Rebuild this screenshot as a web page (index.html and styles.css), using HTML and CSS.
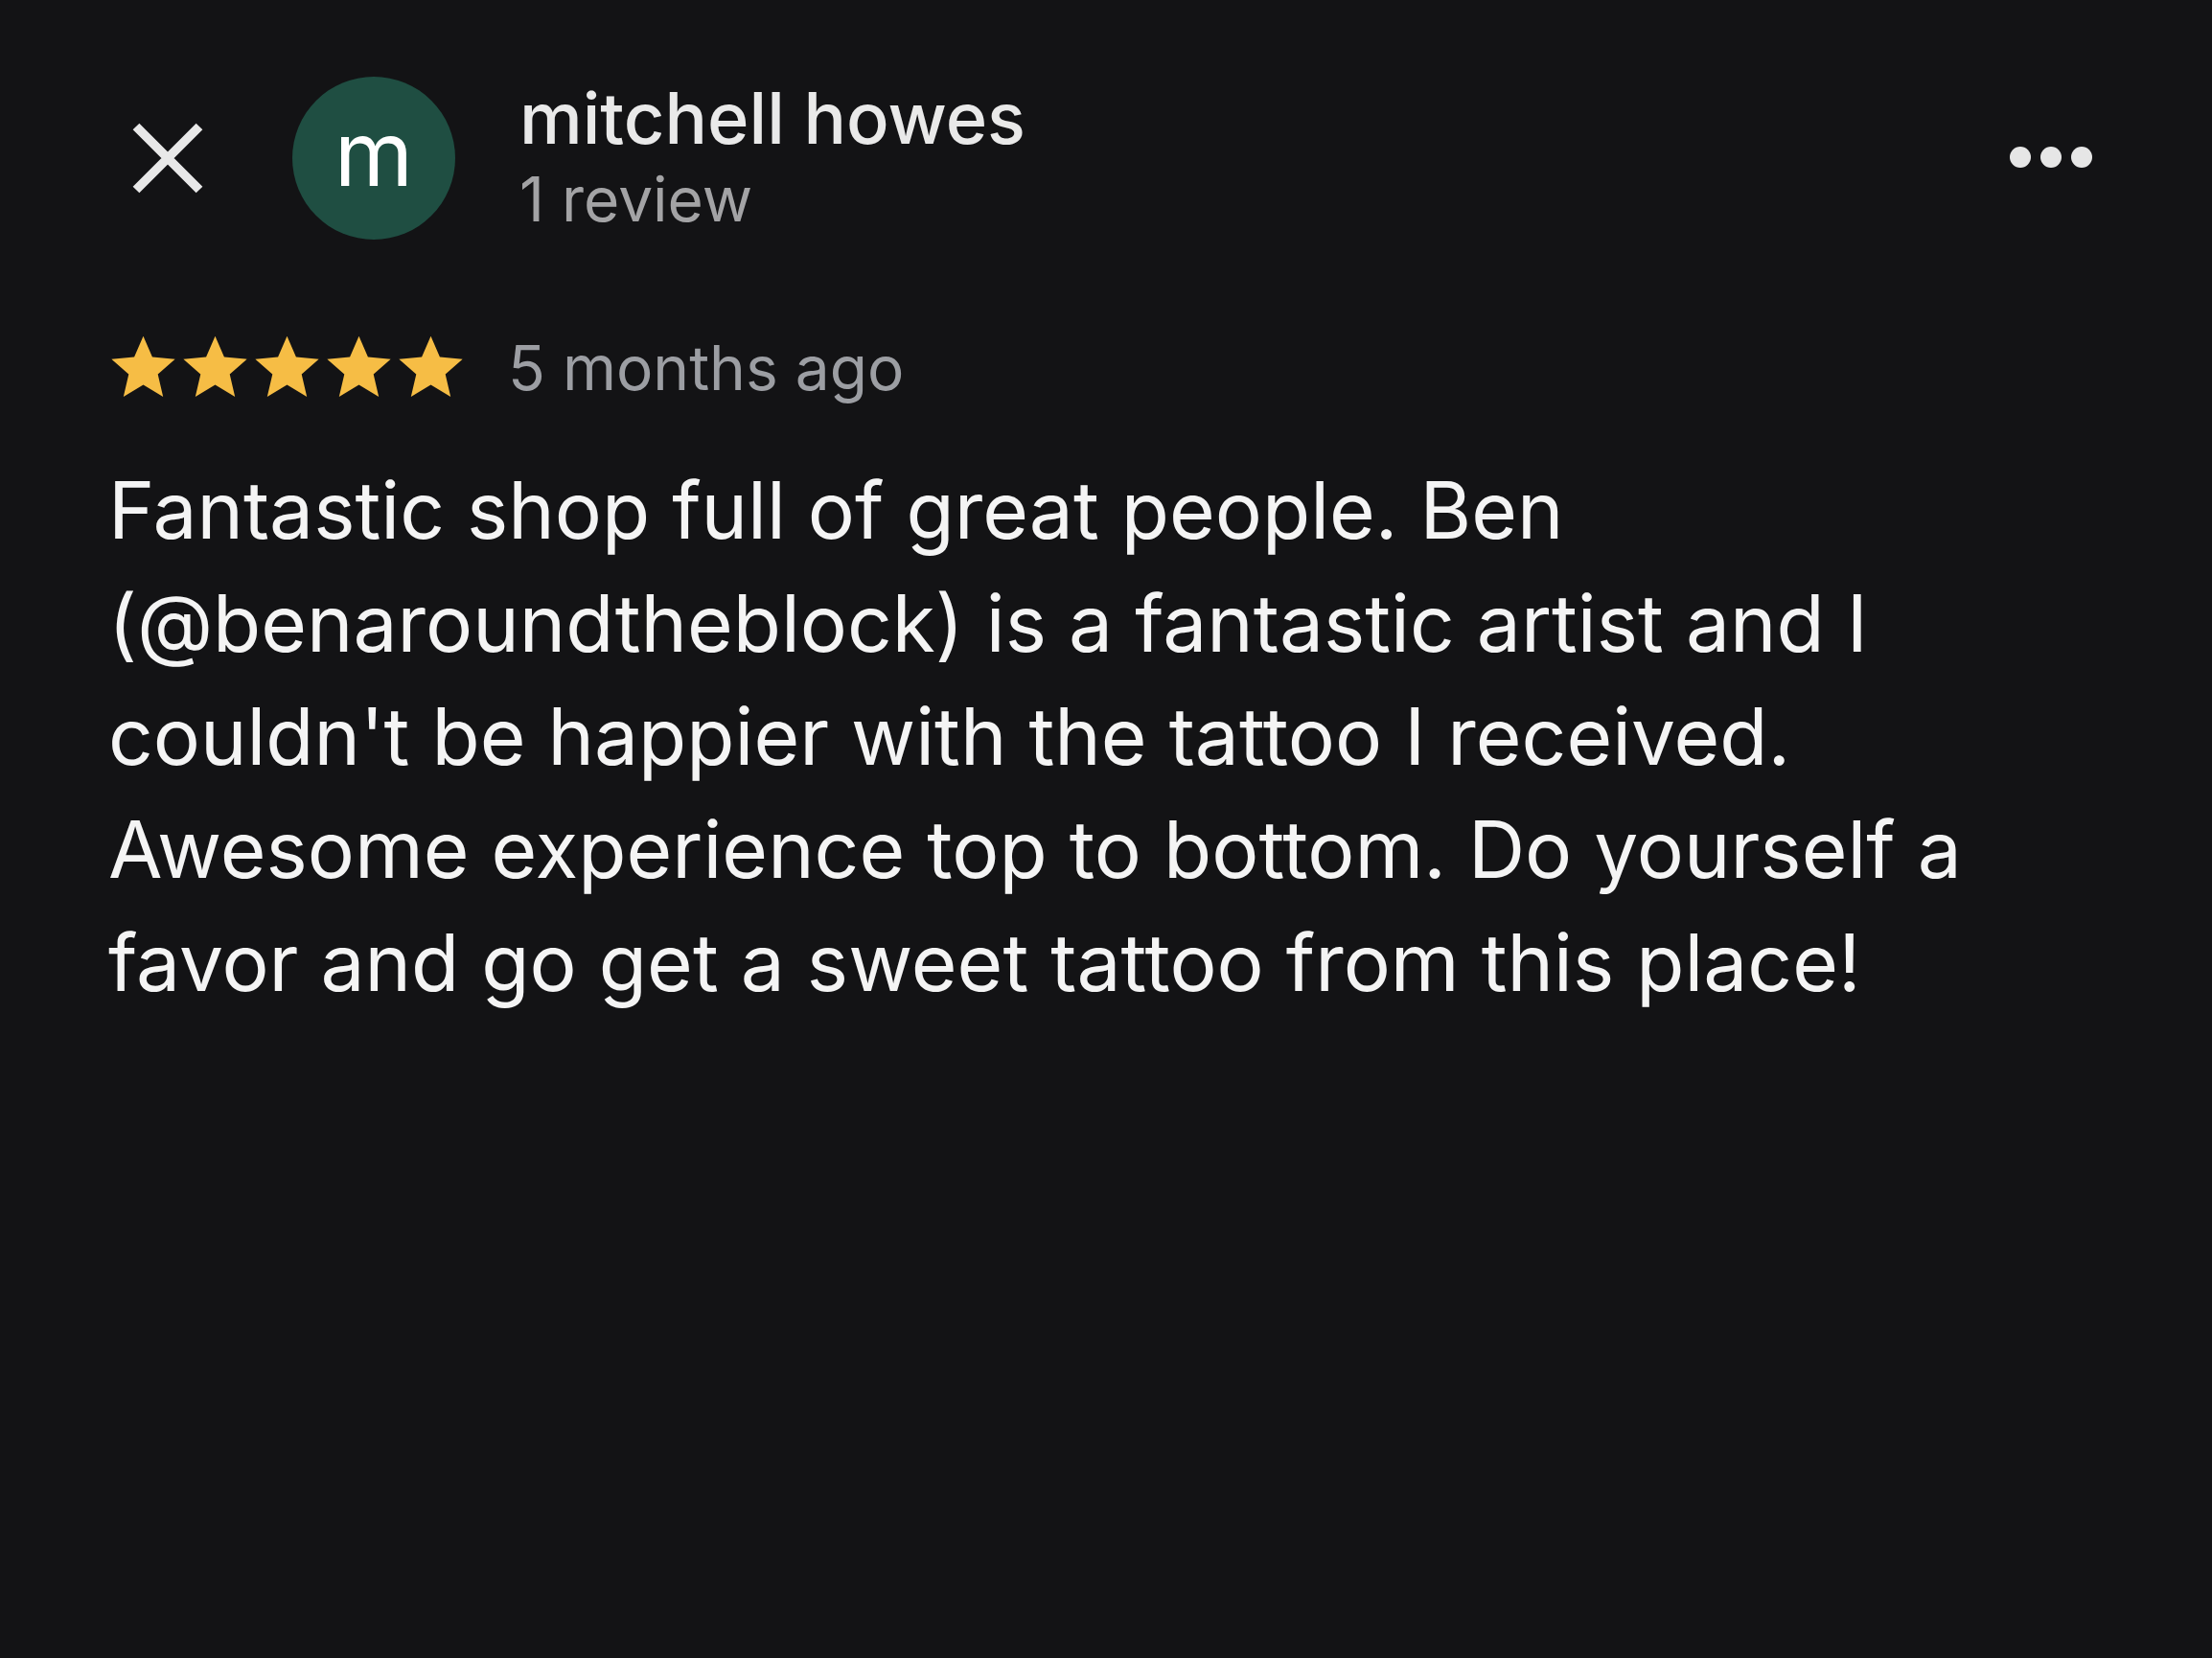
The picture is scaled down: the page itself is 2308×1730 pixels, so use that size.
FILE: index.html
```html
<!DOCTYPE html>
<html lang="en">
<head>
<meta charset="utf-8">
<title>Review</title>
<link rel="stylesheet" href="styles.css">
</head>
<body>
<main class="review">
  <header class="head">
    <button class="close" aria-label="Close">
      <svg viewBox="0 0 76 76" width="76" height="76"><path d="M5 5 L71 71 M71 5 L5 71" stroke="#e8e8e8" stroke-width="9.5" stroke-linecap="butt" fill="none"/></svg>
    </button>
    <div class="avatar">m</div>
    <div class="who">
      <div class="name">mitchell howes</div>
      <div class="count">1 review</div>
    </div>
    <div class="more" aria-label="More"><span></span><span></span><span></span></div>
  </header>
  <div class="meta">
    <div class="stars">
      <svg viewBox="0 0 24 24"><path d="M12 1.2l3.1 7.2 7.8.7-5.9 5.2 1.8 7.7L12 17.9l-6.8 4.1 1.8-7.7-5.9-5.2 7.8-.7z"/></svg>
      <svg viewBox="0 0 24 24"><path d="M12 1.2l3.1 7.2 7.8.7-5.9 5.2 1.8 7.7L12 17.9l-6.8 4.1 1.8-7.7-5.9-5.2 7.8-.7z"/></svg>
      <svg viewBox="0 0 24 24"><path d="M12 1.2l3.1 7.2 7.8.7-5.9 5.2 1.8 7.7L12 17.9l-6.8 4.1 1.8-7.7-5.9-5.2 7.8-.7z"/></svg>
      <svg viewBox="0 0 24 24"><path d="M12 1.2l3.1 7.2 7.8.7-5.9 5.2 1.8 7.7L12 17.9l-6.8 4.1 1.8-7.7-5.9-5.2 7.8-.7z"/></svg>
      <svg viewBox="0 0 24 24"><path d="M12 1.2l3.1 7.2 7.8.7-5.9 5.2 1.8 7.7L12 17.9l-6.8 4.1 1.8-7.7-5.9-5.2 7.8-.7z"/></svg>
    </div>
    <span class="when">5 months ago</span>
  </div>
  <p class="text">Fantastic shop full of great people. Ben (@benaroundtheblock) is a fantastic artist and I couldn't be happier with the tattoo I received. Awesome experience top to bottom. Do yourself a favor and go get a sweet tattoo from this place!</p>
</main>
</body>
</html>
```
FILE: styles.css
```css
html, body {
  margin: 0;
  padding: 0;
  background: #131315;
}
body {
  width: 2308px;
  height: 1730px;
  font-family: Inter, "Open Sans", "Liberation Sans", sans-serif;
  color: #f2f2f2;
}
.review {
  padding: 79px 120px 0 113px;
}
.head {
  display: flex;
  align-items: center;
  height: 171px;
}
.close {
  background: none;
  border: 0;
  padding: 0;
  margin-left: 24px;
  width: 76px;
  height: 76px;
  display: flex;
}
.avatar {
  margin-left: 92px;
  width: 170px;
  height: 170px;
  border-radius: 50%;
  background: #1f4e42;
  color: #ffffff;
  font-size: 94px;
  line-height: 160px;
  text-align: center;
  font-weight: 400;
}
.who {
  margin-left: 67px;
  flex: 1;
  display: flex;
  flex-direction: column;
}
.name {
  font-size: 74px;
  line-height: 86px;
  color: #e9e9e9;
  font-weight: 500;
}
.count {
  font-size: 64px;
  line-height: 84px;
  color: #a3a3a5;
}
.more {
  display: flex;
  gap: 10px;
  align-self: flex-start;
  margin-top: 74px;
  margin-right: 5px;
}
.more span {
  width: 22px;
  height: 22px;
  border-radius: 50%;
  background: #e6e6e6;
}
.meta {
  display: flex;
  align-items: center;
  margin-top: 98px;
  height: 70px;
}
.stars {
  display: flex;
  gap: 2px;
}
.stars svg {
  width: 73px;
  height: 73px;
  fill: #f6bd45;
}
.when {
  margin-left: 44px;
  font-size: 64px;
  color: #9c9ea3;
}
.text {
  margin: 56px 0 0;
  font-size: 82px;
  line-height: 118px;
  color: #f4f4f4;
}
```
